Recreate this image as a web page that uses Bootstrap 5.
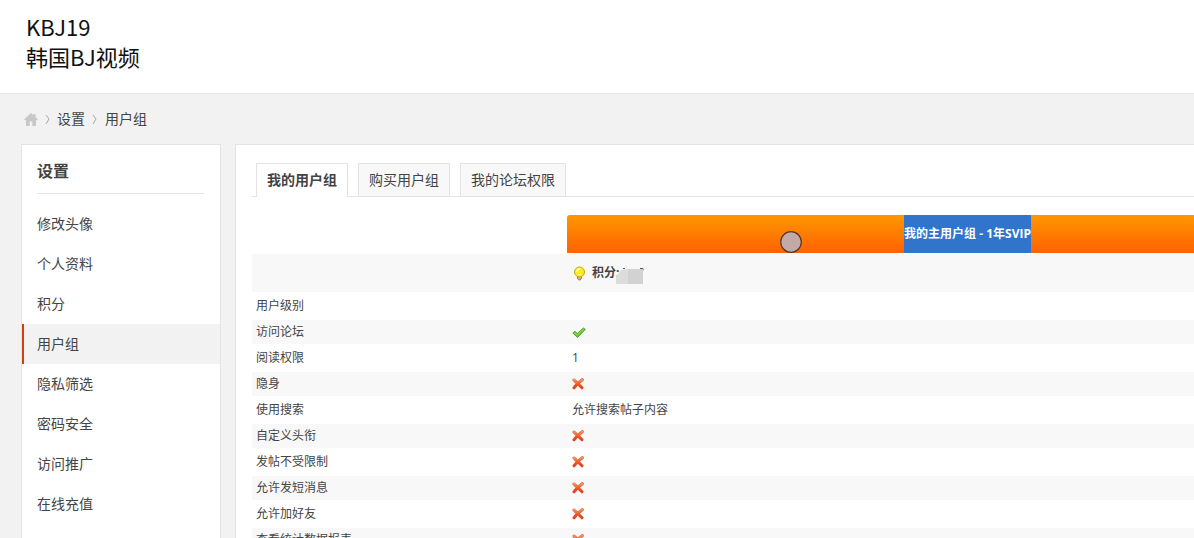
<!DOCTYPE html>
<html lang="zh-CN">
<head>
<meta charset="utf-8">
<meta name="viewport" content="width=device-width, initial-scale=1">
<title>用户组 - 设置</title>
<link href="https://cdn.jsdelivr.net/npm/bootstrap@5.3.0/dist/css/bootstrap.min.css" rel="stylesheet">
<style>
body { background: #f2f2f2; color: #444; font: 14px/20px "Open Sans", "Noto Sans CJK SC", sans-serif; }
a { color: inherit; text-decoration: none; }
.site-head { background: #fff; border-bottom: 1px solid #e6e6e6; padding: 11px 26px 22px; }
.logo { font-family: "Noto Sans CJK SC", sans-serif; font-size: 22px; line-height: 30px; color: #111; }
.crumbs { padding: 15px 24px 15px; gap: 6px; }
.layout { padding-left: 21px; gap: 14px; }
.side { width: 200px; border: 1px solid #e3e3e3; border-bottom: 0; }
.side h2 { font-size: 16px; line-height: 24px; font-weight: 700; margin: 14px 16px 10px 15px; padding-bottom: 10px; border-bottom: 1px solid #e6e6e6; }
.side a { display: block; line-height: 40px; padding-left: 15px; }
.side a.active { background: #f2f2f2; border-left: 2px solid #d63c14; padding-left: 13px; }
.panel { border: 1px solid #e3e3e3; border-width: 1px 0 0 1px; padding: 18px 0 0 16px; min-width: 0; }
.tab-bar { padding-left: 4px; gap: 10px; border-bottom: 1px solid #e3e3e3; }
.tab-bar a { border: 1px solid #e3e3e3; border-bottom: 0; background: #f8f8f8; line-height: 32px; padding: 0 10px; }
.tab-bar a.active { background: #fff; font-weight: 700; padding-bottom: 1px; margin-bottom: -1px; }
.rights { width: 1116px; margin-top: 18px; table-layout: fixed; border-collapse: separate; border-spacing: 0; font-size: 12px; line-height: 24px; }
.rights th, .rights td { padding: 0 4px; border: solid #fff; border-width: 1px 0; font-weight: 400; }
.rights td { padding-left: 5px; }
.rights .label-col { width: 315px; }
.rights .head th { padding: 0; border: 0; line-height: 38px; height: 38px; }
.rights .group-name { background: linear-gradient(#ff9700, #ff6200); border-radius: 3px 3px 0 0; color: #fff; text-align: center; font-weight: 700; }
.group-name span { display: inline-block; background: #3074cc; }
.rights .credit > * { height: 40px; }
.rights .credit td { font-weight: 700; }
.rights tbody tr:nth-child(odd) > * { background: #f8f8f8; }
.rights svg { display: block; }
.rights .points { margin-left: -3px; }
.pointer { position: absolute; left: 780px; top: 231px; }
</style>
</head>
<body class="vh-100 overflow-hidden position-relative d-flex flex-column">
<svg width="0" height="0" class="position-absolute" aria-hidden="true">
  <defs>
    <linearGradient id="crossFill" gradientUnits="userSpaceOnUse" x1="0" y1="1" x2="0" y2="12"><stop stop-color="#f99b6a"/><stop offset=".5" stop-color="#f2571f"/><stop offset="1" stop-color="#cf3a24"/></linearGradient>
    <symbol id="cross" viewBox="0 0 13 13"><path d="M2 2 10 9.8M10.3 1.7C7 4 4.500 6.200 2 9.800" fill="none" stroke="#d0532f" stroke-width="3" stroke-linecap="round"/><path d="M2 2 10 9.8M10.3 1.7C7 4 4.500 6.200 2 9.800" fill="none" stroke="url(#crossFill)" stroke-width="2.2" stroke-linecap="round"/></symbol>
  </defs>
</svg>
<header class="site-head">
  <a class="logo d-block" href="#">KBJ19<br>韩国BJ视频</a>
</header>
<nav class="crumbs d-flex align-items-center" aria-label="位置">
  <a href="#" aria-label="首页"><svg class="d-block" width="14" height="14" viewBox="0 0 14 14"><path d="M7 1 0 7.4l1 1 1-.8V14h3.7V9.5h2.6V14H12V7.6l1 .8 1-1-2.5-2.3V2H9.6v1.3z" fill="#c8c8c8"/></svg></a>
  <svg width="7" height="12" viewBox="0 0 7 12"><path d="m2 2 3 4-3 5" fill="none" stroke="#aaa"/></svg>
  <a href="#">设置</a>
  <svg width="8" height="12" viewBox="0 0 8 12"><path d="m2 2 3 4-3 5" fill="none" stroke="#aaa"/></svg>
  <a href="#">用户组</a>
</nav>
<div class="layout d-flex flex-grow-1">
  <aside class="side bg-white flex-shrink-0">
    <h2>设置</h2>
    <nav>
      <a href="#">修改头像</a>
      <a href="#">个人资料</a>
      <a href="#">积分</a>
      <a href="#" class="active">用户组</a>
      <a href="#">隐私筛选</a>
      <a href="#">密码安全</a>
      <a href="#">访问推广</a>
      <a href="#">在线充值</a>
    </nav>
  </aside>
  <main class="panel bg-white flex-grow-1 overflow-hidden">
    <nav class="tab-bar d-flex">
      <a href="#" class="active">我的用户组</a>
      <a href="#">购买用户组</a>
      <a href="#">我的论坛权限</a>
    </nav>
    <table class="rights">
      <colgroup><col class="label-col"><col></colgroup>
      <thead><tr class="head"><th></th><th class="group-name" scope="col"><span>我的主用户组 - 1年SVIP</span></th></tr></thead>
      <tbody>
        <tr class="credit"><th></th><td>
          <div class="d-flex align-items-center">
            <svg class="me-1" width="16" height="16" viewBox="0 0 16 16"><path d="M5.5 11h4v2.500L8.300 15H6.800l-1.300-1.500z" fill="#d4a5a0" stroke="#94706c" stroke-width=".8"/><circle cx="7.500" cy="7" r="5" fill="#ffec19" stroke="#c5ab00"/><path d="M5 6.500A2.700 2.700 0 0 1 8 4" fill="none" stroke="#fffde0" stroke-width="1.800"/><path d="M6 9.500h3" stroke="#fff8a0"/></svg>
            <span>积分:</span>
            <svg class="points" width="28" height="26" viewBox="0 0 28 26"><path d="M7 8.500h2M24 8.500h3v2" fill="none" stroke="#555"/><path d="M5 10 0 17v7h13V9z" fill="#dcdcdc"/><path d="M12 9h15v15H12z" fill="#d2d2d2"/></svg>
          </div></td></tr>
        <tr><th scope="row">用户级别</th><td></td></tr>
        <tr><th scope="row">访问论坛</th><td><svg width="14" height="13" viewBox="0 0 14 13" role="img" aria-label="是"><path d="M.8 7 3 5.200l2.200 2.300L11.500 2l1.800 1.400L5.500 11.500z" fill="#69c62b" stroke="#3d9420" stroke-width=".8" stroke-linejoin="round"/><path d="m2 6.800 3.200 2L12 3.200" fill="none" stroke="#a5e560" stroke-width=".8"/></svg></td></tr>
        <tr><th scope="row">阅读权限</th><td>1</td></tr>
        <tr><th scope="row">隐身</th><td><svg width="13" height="13" role="img" aria-label="否"><use href="#cross"/></svg></td></tr>
        <tr><th scope="row">使用搜索</th><td>允许搜索帖子内容</td></tr>
        <tr><th scope="row">自定义头衔</th><td><svg width="13" height="13" role="img" aria-label="否"><use href="#cross"/></svg></td></tr>
        <tr><th scope="row">发帖不受限制</th><td><svg width="13" height="13" role="img" aria-label="否"><use href="#cross"/></svg></td></tr>
        <tr><th scope="row">允许发短消息</th><td><svg width="13" height="13" role="img" aria-label="否"><use href="#cross"/></svg></td></tr>
        <tr><th scope="row">允许加好友</th><td><svg width="13" height="13" role="img" aria-label="否"><use href="#cross"/></svg></td></tr>
        <tr><th scope="row">查看统计数据报表</th><td><svg width="13" height="13" role="img" aria-label="否"><use href="#cross"/></svg></td></tr>
      </tbody>
    </table>
  </main>
</div>
<svg class="pointer" width="22" height="22" viewBox="0 0 22 22" aria-hidden="true"><circle cx="11" cy="11" r="10.300" fill="#c3aaa6" stroke="#57372b" stroke-width="1.200"/></svg>
<script src="https://cdn.jsdelivr.net/npm/bootstrap@5.3.0/dist/js/bootstrap.bundle.min.js"></script>
</body>
</html>
